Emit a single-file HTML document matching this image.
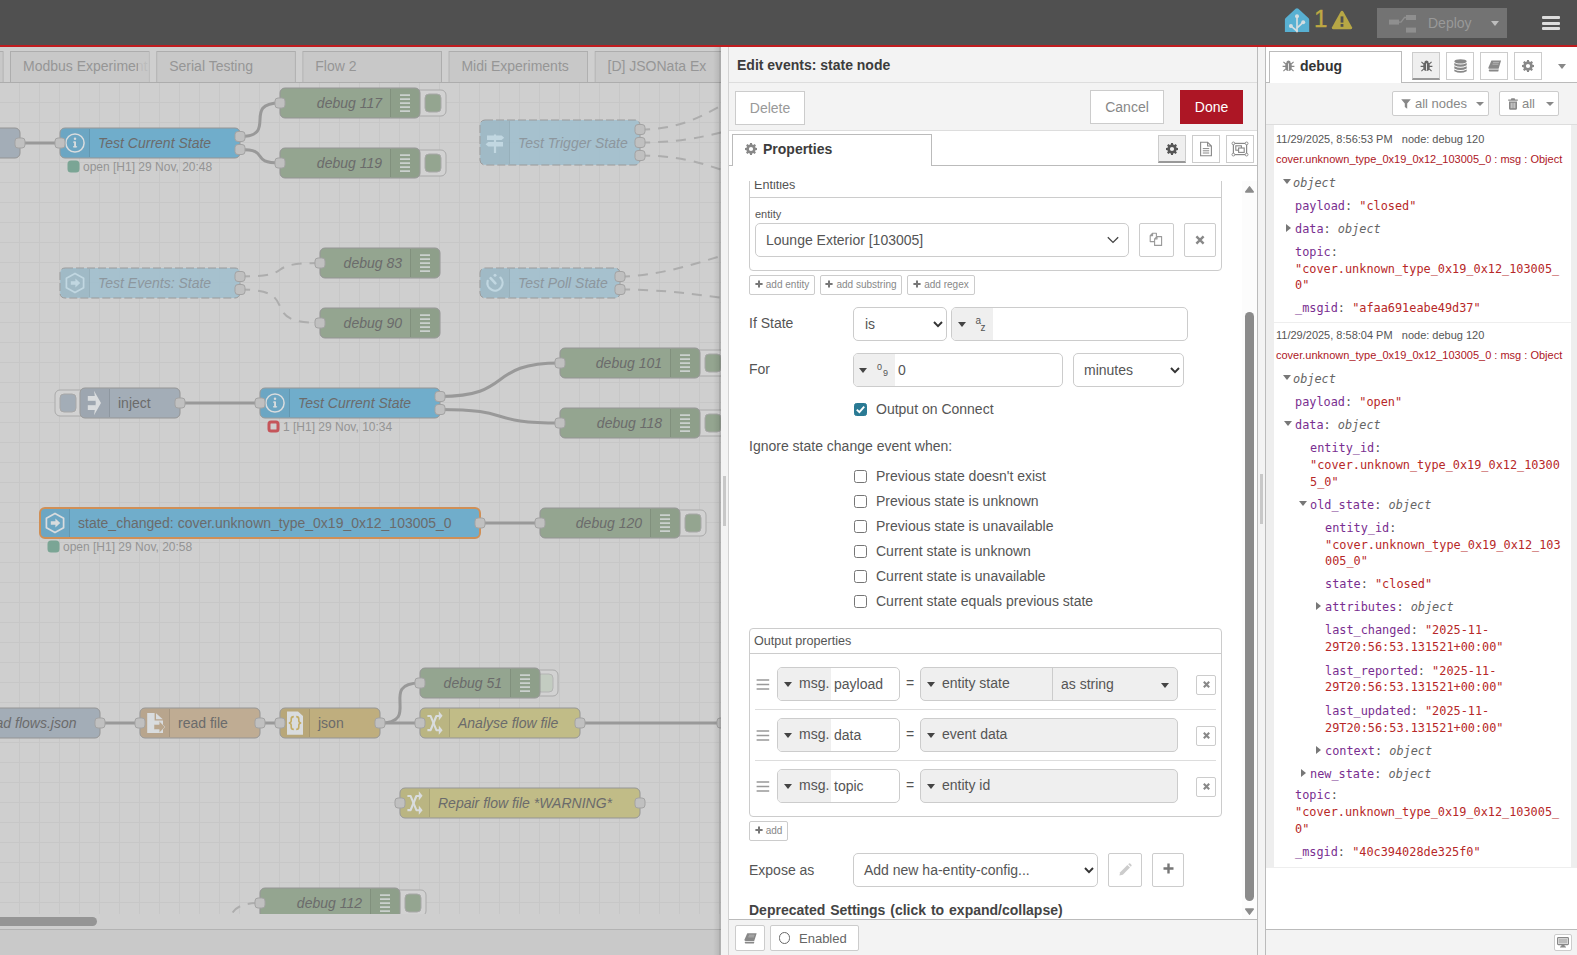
<!DOCTYPE html>
<html lang="en">
<head>
<meta charset="utf-8">
<title>Node-RED</title>
<style>
*{box-sizing:border-box;margin:0;padding:0}
html,body{width:1577px;height:955px;overflow:hidden;background:#f3f3f3;font-family:"Liberation Sans",Arial,sans-serif;font-size:14px;color:#555}
.abs{position:absolute}
#header{position:absolute;left:0;top:0;width:1577px;height:47px;background:#505050;border-bottom:2px solid #c01c1f}
#workspace{position:absolute;left:0;top:47px;width:721px;height:908px;background:#d0d0d0;overflow:hidden}
#tray{position:absolute;left:728px;top:47px;width:530px;height:908px;background:#fff;border-left:1px solid #d2d2d2;border-right:1px solid #bbb}
#sidebar{position:absolute;left:1265px;top:47px;width:312px;height:908px;background:#fff;border-left:1px solid #bbb}
#traysep{position:absolute;left:721px;top:47px;width:7px;height:908px;background:#f3f3f3}
#sidesep{position:absolute;left:1258px;top:47px;width:7px;height:908px;background:#f3f3f3}
.pg{position:absolute;left:0;top:0;width:0;height:0}
#tray .pg{left:-729px;top:-47px}
#sidebar .pg{left:-1266px;top:-47px}
.pg>*{position:absolute;white-space:nowrap}
.btn{border:1px solid #ccc;background:#fff;color:#888;text-align:center;white-space:nowrap}
.inp{border:1px solid #ccc;background:#fff;border-radius:5px;color:#555;white-space:nowrap;overflow:hidden}
.lbl{color:#555;font-size:14px;line-height:20px;white-space:nowrap}
.cb{width:13px;height:13px;border:1px solid #767676;border-radius:2.5px;background:#fff}
.box{border:1px solid #ccc;border-radius:4px}
.ti{border:1px solid #ccc;background:#fff;border-radius:5px;overflow:hidden}
.ti .tb{position:absolute;left:0;top:0;bottom:0;background:#efefef}
.sm{font-size:11px;line-height:17px;color:#888}
.car{width:0;height:0;border-left:4.5px solid transparent;border-right:4.5px solid transparent;border-top:5px solid #444}
.pl{font-size:13px;font-weight:bold;color:#777;margin-right:2px}
.plus{display:inline-block;vertical-align:0.5px;margin-right:3px}
.sm{font-size:10px !important}
.dm{font-size:11px;line-height:14px;color:#555}
.mono{font-family:"DejaVu Sans Mono","Liberation Mono",monospace;font-size:11.87px;line-height:18px;color:#555;letter-spacing:0}
.mono .k{color:#792e90}
.mono .s{color:#b72828}
.mono .t{font-style:italic;color:#666}
</style>
</head>
<body>
<div id="header">
<svg class="abs" style="left:1284px;top:7px" width="26" height="26" viewBox="0 0 26 26">
  <path d="M0.9 25 V12.8 Q0.9 11.8 1.7 11 L11.6 1.8 Q13 0.5 14.4 1.8 L24.4 11 Q25.2 11.8 25.2 12.8 V25 Z" fill="#58b0d2"/>
  <g stroke="#d3dde1" stroke-width="1.7" fill="none" stroke-linecap="round">
    <path d="M13 24.6 V10"/><path d="M13 24 L7.4 19.4"/><path d="M13.4 20.6 L18.8 15.6"/>
  </g>
  <circle cx="13" cy="9.2" r="2" fill="#d3dde1"/><circle cx="6.9" cy="19" r="2" fill="#d3dde1"/><circle cx="19.2" cy="15.2" r="2" fill="#d3dde1"/>
</svg>
<div class="abs" style="left:1314px;top:6px;font-size:24px;line-height:26px;color:#bfa842;font-weight:normal;-webkit-text-stroke:0.4px #bfa842">1</div>
<svg class="abs" style="left:1331px;top:10px" width="22" height="20" viewBox="0 0 22 20">
  <path d="M11 0.8 Q11.9 0.8 12.4 1.7 L21 17.2 Q21.6 19.2 19.8 19.2 H2.2 Q0.4 19.2 1 17.2 L9.6 1.7 Q10.1 0.8 11 0.8 Z" fill="#b7a745"/>
  <rect x="9.6" y="6.4" width="2.8" height="6.2" fill="#505050"/><rect x="9.6" y="14" width="2.8" height="2.8" fill="#505050"/>
</svg>
<div class="abs" style="left:1377px;top:8px;width:130px;height:30px;background:#737373"></div>
<svg class="abs" style="left:1388px;top:13px" width="30" height="20" viewBox="0 0 30 20">
  <rect x="1" y="6.6" width="10" height="5" fill="#8f8f8f"/><rect x="18" y="2" width="10" height="5" fill="#8f8f8f"/><rect x="18" y="14.6" width="10" height="5" fill="#8f8f8f"/>
  <path d="M11 9.1 L13 9.1 L16.5 4.5 L18 4.5" stroke="#8f8f8f" stroke-width="1.3" fill="none"/>
</svg>
<div class="abs" style="left:1428px;top:14px;font-size:14px;line-height:18px;color:#999">Deploy</div>
<div class="abs" style="left:1491px;top:21px;width:0;height:0;border-left:4.5px solid transparent;border-right:4.5px solid transparent;border-top:5px solid #bdbdbd"></div>
<div class="abs" style="left:1542px;top:16px;width:18px;height:3px;background:#dcdcdc;border-radius:1px"></div>
<div class="abs" style="left:1542px;top:21.5px;width:18px;height:3px;background:#dcdcdc;border-radius:1px"></div>
<div class="abs" style="left:1542px;top:27px;width:18px;height:3px;background:#dcdcdc;border-radius:1px"></div>
</div>
<div id="workspace"><svg class="abs" style="left:0;top:0" width="721" height="908" viewBox="0 47 721 908" font-family="Liberation Sans, Arial, sans-serif">
<defs><linearGradient id="edge" x1="0" x2="1" y1="0" y2="0"><stop offset="0" stop-color="#000" stop-opacity="0"/><stop offset="1" stop-color="#000" stop-opacity="0.08"/></linearGradient><clipPath id="cv"><rect x="0" y="83" width="721" height="831"/></clipPath></defs>
<rect x="0" y="47" width="721" height="908" fill="#cfcfcf"/>
<path d="M19.5 83V914 M39.5 83V914 M59.5 83V914 M79.5 83V914 M99.5 83V914 M119.5 83V914 M139.5 83V914 M159.5 83V914 M179.5 83V914 M199.5 83V914 M219.5 83V914 M239.5 83V914 M259.5 83V914 M279.5 83V914 M299.5 83V914 M319.5 83V914 M339.5 83V914 M359.5 83V914 M379.5 83V914 M399.5 83V914 M419.5 83V914 M439.5 83V914 M459.5 83V914 M479.5 83V914 M499.5 83V914 M519.5 83V914 M539.5 83V914 M559.5 83V914 M579.5 83V914 M599.5 83V914 M619.5 83V914 M639.5 83V914 M659.5 83V914 M679.5 83V914 M699.5 83V914 M719.5 83V914 M0 102.5H721 M0 122.5H721 M0 142.5H721 M0 162.5H721 M0 182.5H721 M0 202.5H721 M0 222.5H721 M0 242.5H721 M0 262.5H721 M0 282.5H721 M0 302.5H721 M0 322.5H721 M0 342.5H721 M0 362.5H721 M0 382.5H721 M0 402.5H721 M0 422.5H721 M0 442.5H721 M0 462.5H721 M0 482.5H721 M0 502.5H721 M0 522.5H721 M0 542.5H721 M0 562.5H721 M0 582.5H721 M0 602.5H721 M0 622.5H721 M0 642.5H721 M0 662.5H721 M0 682.5H721 M0 702.5H721 M0 722.5H721 M0 742.5H721 M0 762.5H721 M0 782.5H721 M0 802.5H721 M0 822.5H721 M0 842.5H721 M0 862.5H721 M0 882.5H721 M0 902.5H721" stroke="#c7c7c7" stroke-width="1" fill="none"/>
<rect x="0" y="47" width="721" height="35.5" fill="#cfcfcf"/>
<svg x="-136" y="51" width="139.7" height="32" overflow="hidden"><rect x="0.5" y="0.5" width="138.7" height="40" fill="#c8c8c8" stroke="#adadad"/><text x="13" y="20" font-size="14" fill="#969696"></text></svg>
<svg x="10" y="51" width="139.7" height="32" overflow="hidden"><rect x="0.5" y="0.5" width="138.7" height="40" fill="#c8c8c8" stroke="#adadad"/><text x="13" y="20" font-size="14" fill="#969696">Modbus Experiment</text><rect x="128" y="1" width="11" height="30" fill="#c8c8c8" opacity="0.75"/></svg>
<svg x="156.2" y="51" width="139.7" height="32" overflow="hidden"><rect x="0.5" y="0.5" width="138.7" height="40" fill="#c8c8c8" stroke="#adadad"/><text x="13" y="20" font-size="14" fill="#969696">Serial Testing</text></svg>
<svg x="302.3" y="51" width="139.7" height="32" overflow="hidden"><rect x="0.5" y="0.5" width="138.7" height="40" fill="#c8c8c8" stroke="#adadad"/><text x="13" y="20" font-size="14" fill="#969696">Flow 2</text></svg>
<svg x="448.4" y="51" width="139.7" height="32" overflow="hidden"><rect x="0.5" y="0.5" width="138.7" height="40" fill="#c8c8c8" stroke="#adadad"/><text x="13" y="20" font-size="14" fill="#969696">Midi Experiments</text></svg>
<svg x="594.5" y="51" width="139.7" height="32" overflow="hidden"><rect x="0.5" y="0.5" width="138.7" height="40" fill="#c8c8c8" stroke="#adadad"/><text x="13" y="20" font-size="14" fill="#969696">[D] JSONata Ex</text></svg>
<path d="M0 82.5H721" stroke="#adadad" stroke-width="1"/>
<g clip-path="url(#cv)">
<path d="M20 143 C50.0 143 30.0 143 60 143" stroke="#999" stroke-width="3" fill="none"/>
<path d="M240 136.5 C279.1 136.5 240.9 103 280 103" stroke="#999" stroke-width="3" fill="none"/>
<path d="M240 149.5 C271.7 149.5 248.3 163 280 163" stroke="#999" stroke-width="3" fill="none"/>
<path d="M640 129.5 C715.0 129.5 725.0 83 800 83" stroke="#adadad" stroke-width="2" stroke-dasharray="10 8" fill="none"/>
<path d="M640 142.5 C715.0 142.5 725.0 123 800 123" stroke="#adadad" stroke-width="2" stroke-dasharray="10 8" fill="none"/>
<path d="M640 155.5 C715.0 155.5 725.0 183 800 183" stroke="#adadad" stroke-width="2" stroke-dasharray="10 8" fill="none"/>
<path d="M240 276.5 C300.8 276.5 259.2 263 320 263" stroke="#adadad" stroke-width="2" stroke-dasharray="10 8" fill="none"/>
<path d="M240 289.5 C305.0 289.5 255.0 323 320 323" stroke="#adadad" stroke-width="2" stroke-dasharray="10 8" fill="none"/>
<path d="M620 276.5 C695.0 276.5 785.0 223 860 223" stroke="#adadad" stroke-width="2" stroke-dasharray="10 8" fill="none"/>
<path d="M620 289.5 C695.0 289.5 725.0 303 800 303" stroke="#adadad" stroke-width="2" stroke-dasharray="10 8" fill="none"/>
<path d="M180 403 C240.0 403 200.0 403 260 403" stroke="#999" stroke-width="3" fill="none"/>
<path d="M440 396.5 C515.0 396.5 485.0 363 560 363" stroke="#999" stroke-width="3" fill="none"/>
<path d="M440 409.5 C515.0 409.5 485.0 423 560 423" stroke="#999" stroke-width="3" fill="none"/>
<path d="M480 523 C525.0 523 495.0 523 540 523" stroke="#999" stroke-width="3" fill="none"/>
<path d="M100 723 C130.0 723 110.0 723 140 723" stroke="#999" stroke-width="3" fill="none"/>
<path d="M260 723 C275.0 723 265.0 723 280 723" stroke="#999" stroke-width="3" fill="none"/>
<path d="M380 723 C422.4 723 377.6 683 420 683" stroke="#999" stroke-width="3" fill="none"/>
<path d="M380 723 C410.0 723 390.0 723 420 723" stroke="#999" stroke-width="3" fill="none"/>
<path d="M580 723 C655.0 723 645.0 723 720 723" stroke="#999" stroke-width="3" fill="none"/>
<path d="M200 963 C263.6 963 196.4 903 260 903" stroke="#adadad" stroke-width="2" stroke-dasharray="10 8" fill="none"/>
<rect x="-80" y="128" width="100" height="30" rx="5" fill="#a3adb7" stroke="#959595" stroke-width="1"/>
<text x="-42" y="147.6" font-size="14" font-style="italic" fill="#6b6b6b"></text>
<rect x="15" y="138.0" width="10" height="10" rx="3" fill="#c0c0c0" stroke="#a3a3a3" stroke-width="1"/>
<rect x="60" y="128" width="180" height="30" rx="5" fill="#70adcb" stroke="#959595" stroke-width="1"/>
<path d="M90 129 H65 a4 4 0 0 0 -4 4 V153 a4 4 0 0 0 4 4 H90 Z" fill="#000" fill-opacity="0.035"/>
<path d="M89.5 129V157" stroke="#000" stroke-opacity="0.09"/>
<g transform="translate(75 143.0)" opacity="1"><circle r="9.1" fill="none" stroke="#d9dcde" stroke-width="1.5"/><rect x="-0.9" y="-1.5" width="1.9" height="5.8" fill="#d9dcde"/><rect x="-1.9" y="-1.5" width="2" height="1.2" fill="#d9dcde"/><rect x="-2" y="3.2" width="4.1" height="1.2" fill="#d9dcde"/><circle cx="0" cy="-4.2" r="1.25" fill="#d9dcde"/></g>
<text x="98" y="147.6" font-size="14" font-style="italic" fill="#6b6b6b">Test Current State</text>
<rect x="55" y="138.0" width="10" height="10" rx="3" fill="#c0c0c0" stroke="#a3a3a3" stroke-width="1"/>
<rect x="235" y="131.5" width="10" height="10" rx="3" fill="#c0c0c0" stroke="#a3a3a3" stroke-width="1"/>
<rect x="235" y="144.5" width="10" height="10" rx="3" fill="#c0c0c0" stroke="#a3a3a3" stroke-width="1"/>
<rect x="69" y="162" width="9" height="9" rx="2" fill="#7ba595" stroke="#7ba595" stroke-width="3" stroke-linejoin="round"/>
<text x="83" y="170.6" font-size="12" fill="#949494">open [H1] 29 Nov, 20:48</text>
<rect x="414" y="90" width="32" height="26" rx="5" fill="#d2d2d2" stroke="#aaaaaa"/>
<rect x="425" y="94" width="16" height="18" rx="4" fill="#94a590" stroke="#a8a8a8" stroke-width="1"/>
<rect x="280" y="88" width="140" height="30" rx="5" fill="#94a590" stroke="#959595" stroke-width="1"/>
<path d="M390 89 H415 a4 4 0 0 1 4 4 V113 a4 4 0 0 1 -4 4 H390 Z" fill="#000" fill-opacity="0.035"/>
<path d="M390.5 89V117" stroke="#000" stroke-opacity="0.09"/>
<g transform="translate(405 103.0)" opacity="1"><rect x="-5" y="-8.6" width="10" height="1.4" fill="#d9dcde"/><rect x="-5" y="-4.6" width="10" height="1.4" fill="#d9dcde"/><rect x="-5" y="-0.5999999999999996" width="10" height="1.4" fill="#d9dcde"/><rect x="-5" y="3.4000000000000004" width="10" height="1.4" fill="#d9dcde"/><rect x="-5" y="7.4" width="10" height="1.4" fill="#d9dcde"/></g>
<text x="382" y="107.6" font-size="14" font-style="italic" text-anchor="end" fill="#6b6b6b">debug 117</text>
<rect x="275" y="98.0" width="10" height="10" rx="3" fill="#c0c0c0" stroke="#a3a3a3" stroke-width="1"/>
<rect x="414" y="150" width="32" height="26" rx="5" fill="#d2d2d2" stroke="#aaaaaa"/>
<rect x="425" y="154" width="16" height="18" rx="4" fill="#94a590" stroke="#a8a8a8" stroke-width="1"/>
<rect x="280" y="148" width="140" height="30" rx="5" fill="#94a590" stroke="#959595" stroke-width="1"/>
<path d="M390 149 H415 a4 4 0 0 1 4 4 V173 a4 4 0 0 1 -4 4 H390 Z" fill="#000" fill-opacity="0.035"/>
<path d="M390.5 149V177" stroke="#000" stroke-opacity="0.09"/>
<g transform="translate(405 163.0)" opacity="1"><rect x="-5" y="-8.6" width="10" height="1.4" fill="#d9dcde"/><rect x="-5" y="-4.6" width="10" height="1.4" fill="#d9dcde"/><rect x="-5" y="-0.5999999999999996" width="10" height="1.4" fill="#d9dcde"/><rect x="-5" y="3.4000000000000004" width="10" height="1.4" fill="#d9dcde"/><rect x="-5" y="7.4" width="10" height="1.4" fill="#d9dcde"/></g>
<text x="382" y="167.6" font-size="14" font-style="italic" text-anchor="end" fill="#6b6b6b">debug 119</text>
<rect x="275" y="158.0" width="10" height="10" rx="3" fill="#c0c0c0" stroke="#a3a3a3" stroke-width="1"/>
<rect x="480" y="120" width="160" height="45" rx="5" fill="#a2bfce" fill-opacity="0.93" stroke="#9a9a9a" stroke-width="1" stroke-dasharray="8 3"/>
<path d="M510 121 H485 a4 4 0 0 0 -4 4 V160 a4 4 0 0 0 4 4 H510 Z" fill="#000" fill-opacity="0.035"/>
<path d="M509.5 121V164" stroke="#000" stroke-opacity="0.05"/>
<g transform="translate(495 143.5)" opacity="1"><rect x="-1.1" y="-9" width="2.2" height="18.5" fill="#c1d7e1"/><path d="M-8 -8 H6.6 L9.2 -5.8 L6.6 -3.6 H-8 Z" fill="#c1d7e1"/><path d="M8 -1.6 H-6.8 L-9.4 0.7 L-6.8 3 H8 Z" fill="#c1d7e1"/></g>
<text x="518" y="148.1" font-size="14" font-style="italic" fill="#8d979e">Test Trigger State</text>
<rect x="635" y="124.5" width="10" height="10" rx="3" fill="#c0c0c0" stroke="#a3a3a3" stroke-width="1"/>
<rect x="635" y="137.5" width="10" height="10" rx="3" fill="#c0c0c0" stroke="#a3a3a3" stroke-width="1"/>
<rect x="635" y="150.5" width="10" height="10" rx="3" fill="#c0c0c0" stroke="#a3a3a3" stroke-width="1"/>
<rect x="60" y="268" width="180" height="30" rx="5" fill="#a2bfce" fill-opacity="0.93" stroke="#9a9a9a" stroke-width="1" stroke-dasharray="8 3"/>
<path d="M90 269 H65 a4 4 0 0 0 -4 4 V293 a4 4 0 0 0 4 4 H90 Z" fill="#000" fill-opacity="0.035"/>
<path d="M89.5 269V297" stroke="#000" stroke-opacity="0.05"/>
<g transform="translate(75 283.0)" opacity="1"><path d="M0 -9.6 L8.6 -4.8 V4.8 L0 9.6 L-8.6 4.8 V-4.8 Z" fill="none" stroke="#c1d7e1" stroke-width="1.7" stroke-linejoin="round"/><path d="M-4.2 -1.7 H0.4 V-4.6 L5.2 0 L0.4 4.6 V1.7 H-4.2 Z" fill="#c1d7e1"/></g>
<text x="98" y="287.6" font-size="14" font-style="italic" fill="#8d979e">Test Events: State</text>
<rect x="235" y="271.5" width="10" height="10" rx="3" fill="#c0c0c0" stroke="#a3a3a3" stroke-width="1"/>
<rect x="235" y="284.5" width="10" height="10" rx="3" fill="#c0c0c0" stroke="#a3a3a3" stroke-width="1"/>
<rect x="320" y="248" width="120" height="30" rx="5" fill="#94a590" stroke="#959595" stroke-width="1"/>
<path d="M410 249 H435 a4 4 0 0 1 4 4 V273 a4 4 0 0 1 -4 4 H410 Z" fill="#000" fill-opacity="0.035"/>
<path d="M410.5 249V277" stroke="#000" stroke-opacity="0.09"/>
<g transform="translate(425 263.0)" opacity="1"><rect x="-5" y="-8.6" width="10" height="1.4" fill="#d9dcde"/><rect x="-5" y="-4.6" width="10" height="1.4" fill="#d9dcde"/><rect x="-5" y="-0.5999999999999996" width="10" height="1.4" fill="#d9dcde"/><rect x="-5" y="3.4000000000000004" width="10" height="1.4" fill="#d9dcde"/><rect x="-5" y="7.4" width="10" height="1.4" fill="#d9dcde"/></g>
<text x="402" y="267.6" font-size="14" font-style="italic" text-anchor="end" fill="#6b6b6b">debug 83</text>
<rect x="315" y="258.0" width="10" height="10" rx="3" fill="#c0c0c0" stroke="#a3a3a3" stroke-width="1"/>
<rect x="320" y="308" width="120" height="30" rx="5" fill="#94a590" stroke="#959595" stroke-width="1"/>
<path d="M410 309 H435 a4 4 0 0 1 4 4 V333 a4 4 0 0 1 -4 4 H410 Z" fill="#000" fill-opacity="0.035"/>
<path d="M410.5 309V337" stroke="#000" stroke-opacity="0.09"/>
<g transform="translate(425 323.0)" opacity="1"><rect x="-5" y="-8.6" width="10" height="1.4" fill="#d9dcde"/><rect x="-5" y="-4.6" width="10" height="1.4" fill="#d9dcde"/><rect x="-5" y="-0.5999999999999996" width="10" height="1.4" fill="#d9dcde"/><rect x="-5" y="3.4000000000000004" width="10" height="1.4" fill="#d9dcde"/><rect x="-5" y="7.4" width="10" height="1.4" fill="#d9dcde"/></g>
<text x="402" y="327.6" font-size="14" font-style="italic" text-anchor="end" fill="#6b6b6b">debug 90</text>
<rect x="315" y="318.0" width="10" height="10" rx="3" fill="#c0c0c0" stroke="#a3a3a3" stroke-width="1"/>
<rect x="480" y="268" width="140" height="30" rx="5" fill="#a2bfce" fill-opacity="0.93" stroke="#9a9a9a" stroke-width="1" stroke-dasharray="8 3"/>
<path d="M510 269 H485 a4 4 0 0 0 -4 4 V293 a4 4 0 0 0 4 4 H510 Z" fill="#000" fill-opacity="0.035"/>
<path d="M509.5 269V297" stroke="#000" stroke-opacity="0.05"/>
<g transform="translate(495 283.0)" opacity="1"><path d="M5.4 -5.4 A7.6 7.6 0 1 1 -7.3 -2.2" fill="none" stroke="#c1d7e1" stroke-width="2.2" stroke-linecap="round"/><circle cx="0" cy="-7.8" r="1.5" fill="#c1d7e1"/><path d="M0.4 0.4 L-4.4 -4.8" stroke="#c1d7e1" stroke-width="2.6" stroke-linecap="round"/></g>
<text x="518" y="287.6" font-size="14" font-style="italic" fill="#8d979e">Test Poll State</text>
<rect x="615" y="271.5" width="10" height="10" rx="3" fill="#c0c0c0" stroke="#a3a3a3" stroke-width="1"/>
<rect x="615" y="284.5" width="10" height="10" rx="3" fill="#c0c0c0" stroke="#a3a3a3" stroke-width="1"/>
<rect x="55" y="390" width="32" height="26" rx="5" fill="#d2d2d2" stroke="#aaaaaa"/>
<rect x="60" y="394" width="16" height="18" rx="4" fill="#a3adb7" stroke="#a8a8a8" stroke-width="1"/>
<rect x="80" y="388" width="100" height="30" rx="5" fill="#a3adb7" stroke="#959595" stroke-width="1"/>
<path d="M110 389 H85 a4 4 0 0 0 -4 4 V413 a4 4 0 0 0 4 4 H110 Z" fill="#000" fill-opacity="0.035"/>
<path d="M109.5 389V417" stroke="#000" stroke-opacity="0.09"/>
<g transform="translate(95 403.0)" opacity="1"><rect x="-7.2" y="-7" width="8" height="4.8" fill="#d9dcde"/><rect x="-7.2" y="2.2" width="8" height="4.8" fill="#d9dcde"/><path d="M-1 -12.2 L6 0 L-1 12.2 L0.8 0 Z" fill="#d9dcde"/></g>
<text x="118" y="407.6" font-size="14" font-style="normal" fill="#6b6b6b">inject</text>
<rect x="175" y="398.0" width="10" height="10" rx="3" fill="#c0c0c0" stroke="#a3a3a3" stroke-width="1"/>
<rect x="260" y="388" width="180" height="30" rx="5" fill="#70adcb" stroke="#959595" stroke-width="1"/>
<path d="M290 389 H265 a4 4 0 0 0 -4 4 V413 a4 4 0 0 0 4 4 H290 Z" fill="#000" fill-opacity="0.035"/>
<path d="M289.5 389V417" stroke="#000" stroke-opacity="0.09"/>
<g transform="translate(275 403.0)" opacity="1"><circle r="9.1" fill="none" stroke="#d9dcde" stroke-width="1.5"/><rect x="-0.9" y="-1.5" width="1.9" height="5.8" fill="#d9dcde"/><rect x="-1.9" y="-1.5" width="2" height="1.2" fill="#d9dcde"/><rect x="-2" y="3.2" width="4.1" height="1.2" fill="#d9dcde"/><circle cx="0" cy="-4.2" r="1.25" fill="#d9dcde"/></g>
<text x="298" y="407.6" font-size="14" font-style="italic" fill="#6b6b6b">Test Current State</text>
<rect x="255" y="398.0" width="10" height="10" rx="3" fill="#c0c0c0" stroke="#a3a3a3" stroke-width="1"/>
<rect x="435" y="391.5" width="10" height="10" rx="3" fill="#c0c0c0" stroke="#a3a3a3" stroke-width="1"/>
<rect x="435" y="404.5" width="10" height="10" rx="3" fill="#c0c0c0" stroke="#a3a3a3" stroke-width="1"/>
<rect x="269" y="422" width="9" height="9" rx="2" fill="#d0cfcf" stroke="#c5555a" stroke-width="3" stroke-linejoin="round"/>
<text x="283" y="430.6" font-size="12" fill="#949494">1 [H1] 29 Nov, 10:34</text>
<rect x="694" y="350" width="32" height="26" rx="5" fill="#d2d2d2" stroke="#aaaaaa"/>
<rect x="705" y="354" width="16" height="18" rx="4" fill="#94a590" stroke="#a8a8a8" stroke-width="1"/>
<rect x="560" y="348" width="140" height="30" rx="5" fill="#94a590" stroke="#959595" stroke-width="1"/>
<path d="M670 349 H695 a4 4 0 0 1 4 4 V373 a4 4 0 0 1 -4 4 H670 Z" fill="#000" fill-opacity="0.035"/>
<path d="M670.5 349V377" stroke="#000" stroke-opacity="0.09"/>
<g transform="translate(685 363.0)" opacity="1"><rect x="-5" y="-8.6" width="10" height="1.4" fill="#d9dcde"/><rect x="-5" y="-4.6" width="10" height="1.4" fill="#d9dcde"/><rect x="-5" y="-0.5999999999999996" width="10" height="1.4" fill="#d9dcde"/><rect x="-5" y="3.4000000000000004" width="10" height="1.4" fill="#d9dcde"/><rect x="-5" y="7.4" width="10" height="1.4" fill="#d9dcde"/></g>
<text x="662" y="367.6" font-size="14" font-style="italic" text-anchor="end" fill="#6b6b6b">debug 101</text>
<rect x="555" y="358.0" width="10" height="10" rx="3" fill="#c0c0c0" stroke="#a3a3a3" stroke-width="1"/>
<rect x="694" y="410" width="32" height="26" rx="5" fill="#d2d2d2" stroke="#aaaaaa"/>
<rect x="705" y="414" width="16" height="18" rx="4" fill="#94a590" stroke="#a8a8a8" stroke-width="1"/>
<rect x="560" y="408" width="140" height="30" rx="5" fill="#94a590" stroke="#959595" stroke-width="1"/>
<path d="M670 409 H695 a4 4 0 0 1 4 4 V433 a4 4 0 0 1 -4 4 H670 Z" fill="#000" fill-opacity="0.035"/>
<path d="M670.5 409V437" stroke="#000" stroke-opacity="0.09"/>
<g transform="translate(685 423.0)" opacity="1"><rect x="-5" y="-8.6" width="10" height="1.4" fill="#d9dcde"/><rect x="-5" y="-4.6" width="10" height="1.4" fill="#d9dcde"/><rect x="-5" y="-0.5999999999999996" width="10" height="1.4" fill="#d9dcde"/><rect x="-5" y="3.4000000000000004" width="10" height="1.4" fill="#d9dcde"/><rect x="-5" y="7.4" width="10" height="1.4" fill="#d9dcde"/></g>
<text x="662" y="427.6" font-size="14" font-style="italic" text-anchor="end" fill="#6b6b6b">debug 118</text>
<rect x="555" y="418.0" width="10" height="10" rx="3" fill="#c0c0c0" stroke="#a3a3a3" stroke-width="1"/>
<rect x="40" y="508" width="440" height="30" rx="5" fill="#70adcb" stroke="#d08f56" stroke-width="2"/>
<path d="M70 509 H45 a4 4 0 0 0 -4 4 V533 a4 4 0 0 0 4 4 H70 Z" fill="#000" fill-opacity="0.035"/>
<path d="M69.5 509V537" stroke="#000" stroke-opacity="0.09"/>
<g transform="translate(55 523.0)" opacity="1"><path d="M0 -9.6 L8.6 -4.8 V4.8 L0 9.6 L-8.6 4.8 V-4.8 Z" fill="none" stroke="#d9dcde" stroke-width="1.7" stroke-linejoin="round"/><path d="M-4.2 -1.7 H0.4 V-4.6 L5.2 0 L0.4 4.6 V1.7 H-4.2 Z" fill="#d9dcde"/></g>
<text x="78" y="527.6" font-size="14" font-style="normal" fill="#6b6b6b">state_changed: cover.unknown_type_0x19_0x12_103005_0</text>
<rect x="475" y="518.0" width="10" height="10" rx="3" fill="#c0c0c0" stroke="#a3a3a3" stroke-width="1"/>
<rect x="49" y="542" width="9" height="9" rx="2" fill="#7ba595" stroke="#7ba595" stroke-width="3" stroke-linejoin="round"/>
<text x="63" y="550.6" font-size="12" fill="#949494">open [H1] 29 Nov, 20:58</text>
<rect x="674" y="510" width="32" height="26" rx="5" fill="#d2d2d2" stroke="#aaaaaa"/>
<rect x="685" y="514" width="16" height="18" rx="4" fill="#94a590" stroke="#a8a8a8" stroke-width="1"/>
<rect x="540" y="508" width="140" height="30" rx="5" fill="#94a590" stroke="#959595" stroke-width="1"/>
<path d="M650 509 H675 a4 4 0 0 1 4 4 V533 a4 4 0 0 1 -4 4 H650 Z" fill="#000" fill-opacity="0.035"/>
<path d="M650.5 509V537" stroke="#000" stroke-opacity="0.09"/>
<g transform="translate(665 523.0)" opacity="1"><rect x="-5" y="-8.6" width="10" height="1.4" fill="#d9dcde"/><rect x="-5" y="-4.6" width="10" height="1.4" fill="#d9dcde"/><rect x="-5" y="-0.5999999999999996" width="10" height="1.4" fill="#d9dcde"/><rect x="-5" y="3.4000000000000004" width="10" height="1.4" fill="#d9dcde"/><rect x="-5" y="7.4" width="10" height="1.4" fill="#d9dcde"/></g>
<text x="642" y="527.6" font-size="14" font-style="italic" text-anchor="end" fill="#6b6b6b">debug 120</text>
<rect x="535" y="518.0" width="10" height="10" rx="3" fill="#c0c0c0" stroke="#a3a3a3" stroke-width="1"/>
<rect x="526" y="670" width="32" height="26" rx="5" fill="#d2d2d2" stroke="#aaaaaa"/>
<rect x="537" y="674" width="16" height="18" rx="4" fill="#c3ccc1" stroke="#b4b4b4" stroke-width="1"/>
<rect x="420" y="668" width="120" height="30" rx="5" fill="#94a590" stroke="#959595" stroke-width="1"/>
<path d="M510 669 H535 a4 4 0 0 1 4 4 V693 a4 4 0 0 1 -4 4 H510 Z" fill="#000" fill-opacity="0.035"/>
<path d="M510.5 669V697" stroke="#000" stroke-opacity="0.09"/>
<g transform="translate(525 683.0)" opacity="1"><rect x="-5" y="-8.6" width="10" height="1.4" fill="#d9dcde"/><rect x="-5" y="-4.6" width="10" height="1.4" fill="#d9dcde"/><rect x="-5" y="-0.5999999999999996" width="10" height="1.4" fill="#d9dcde"/><rect x="-5" y="3.4000000000000004" width="10" height="1.4" fill="#d9dcde"/><rect x="-5" y="7.4" width="10" height="1.4" fill="#d9dcde"/></g>
<text x="502" y="687.6" font-size="14" font-style="italic" text-anchor="end" fill="#6b6b6b">debug 51</text>
<rect x="415" y="678.0" width="10" height="10" rx="3" fill="#c0c0c0" stroke="#a3a3a3" stroke-width="1"/>
<rect x="-100" y="708" width="200" height="30" rx="5" fill="#a3adb7" stroke="#959595" stroke-width="1"/>
<text x="76.5" y="727.6" font-size="14" font-style="italic" text-anchor="end" fill="#6b6b6b">Read flows.json</text>
<rect x="95" y="718.0" width="10" height="10" rx="3" fill="#c0c0c0" stroke="#a3a3a3" stroke-width="1"/>
<rect x="140" y="708" width="120" height="30" rx="5" fill="#bfac93" stroke="#959595" stroke-width="1"/>
<path d="M170 709 H145 a4 4 0 0 0 -4 4 V733 a4 4 0 0 0 4 4 H170 Z" fill="#000" fill-opacity="0.035"/>
<path d="M169.5 709V737" stroke="#000" stroke-opacity="0.09"/>
<g transform="translate(155 723.0)" opacity="1"><path d="M-7.8 -10 H-0.4 V-2.600 H8 V10 H-7.800 Z" fill="#d9dcde"/><path d="M1 -9.800 L7.800 -3.800 H1 Z" fill="#d9dcde"/><path d="M-1 1.400 H4.200 V-1.900 L10 4 L4.200 9.900 V6.600 H-1 Z" fill="#b9a68d" stroke="#d9dcde" stroke-width="0.500"/></g>
<text x="178" y="727.6" font-size="14" font-style="normal" fill="#6b6b6b">read file</text>
<rect x="135" y="718.0" width="10" height="10" rx="3" fill="#c0c0c0" stroke="#a3a3a3" stroke-width="1"/>
<rect x="255" y="718.0" width="10" height="10" rx="3" fill="#c0c0c0" stroke="#a3a3a3" stroke-width="1"/>
<rect x="280" y="708" width="100" height="30" rx="5" fill="#bfae7e" stroke="#959595" stroke-width="1"/>
<path d="M310 709 H285 a4 4 0 0 0 -4 4 V733 a4 4 0 0 0 4 4 H310 Z" fill="#000" fill-opacity="0.035"/>
<path d="M309.5 709V737" stroke="#000" stroke-opacity="0.09"/>
<g transform="translate(295 723.0)" opacity="1"><path d="M-8 -11.400 H3 L8 -7 V11.800 H-8 Z" fill="#d9dcde"/><path d="M-1.200 -6.400 q-2.600 0 -2.600 2.400 v1.800 q0 2 -2.400 2.200 q2.400 0.200 2.400 2.200 v1.800 q0 2.400 2.600 2.400" fill="none" stroke="#c4ad66" stroke-width="1.600"/><path d="M1.200 -6.400 q2.600 0 2.600 2.400 v1.800 q0 2 2.400 2.200 q-2.400 0.200 -2.400 2.200 v1.800 q0 2.400 -2.600 2.400" fill="none" stroke="#c4ad66" stroke-width="1.600"/></g>
<text x="318" y="727.6" font-size="14" font-style="normal" fill="#6b6b6b">json</text>
<rect x="275" y="718.0" width="10" height="10" rx="3" fill="#c0c0c0" stroke="#a3a3a3" stroke-width="1"/>
<rect x="375" y="718.0" width="10" height="10" rx="3" fill="#c0c0c0" stroke="#a3a3a3" stroke-width="1"/>
<rect x="420" y="708" width="160" height="30" rx="5" fill="#c1bc87" stroke="#959595" stroke-width="1"/>
<path d="M450 709 H425 a4 4 0 0 0 -4 4 V733 a4 4 0 0 0 4 4 H450 Z" fill="#000" fill-opacity="0.035"/>
<path d="M449.5 709V737" stroke="#000" stroke-opacity="0.09"/>
<g transform="translate(435 723.0)" opacity="1"><path d="M-7.600 -7 H-4.400 L1.400 7.200 H4.400" fill="none" stroke="#d9dcde" stroke-width="2" stroke-linejoin="round"/><path d="M-7.600 7.200 H-4.400 L1.400 -7 H4.400" fill="none" stroke="#d9dcde" stroke-width="2.200" stroke-linejoin="round"/><path d="M3.800 -11.800 L7.600 -7.200 L3.800 -2.600 Z" fill="#d9dcde"/><path d="M3.800 2.600 L7.600 7.200 L3.800 11.800 Z" fill="#d9dcde"/></g>
<text x="458" y="727.6" font-size="14" font-style="italic" fill="#6b6b6b">Analyse flow file</text>
<rect x="415" y="718.0" width="10" height="10" rx="3" fill="#c0c0c0" stroke="#a3a3a3" stroke-width="1"/>
<rect x="575" y="718.0" width="10" height="10" rx="3" fill="#c0c0c0" stroke="#a3a3a3" stroke-width="1"/>
<rect x="717" y="718" width="10" height="10" rx="3" fill="#c0c0c0" stroke="#a3a3a3" stroke-width="1"/>
<rect x="400" y="788" width="240" height="30" rx="5" fill="#c1bc87" stroke="#959595" stroke-width="1"/>
<path d="M430 789 H405 a4 4 0 0 0 -4 4 V813 a4 4 0 0 0 4 4 H430 Z" fill="#000" fill-opacity="0.035"/>
<path d="M429.5 789V817" stroke="#000" stroke-opacity="0.09"/>
<g transform="translate(415 803.0)" opacity="1"><path d="M-7.600 -7 H-4.400 L1.400 7.200 H4.400" fill="none" stroke="#d9dcde" stroke-width="2" stroke-linejoin="round"/><path d="M-7.600 7.200 H-4.400 L1.400 -7 H4.400" fill="none" stroke="#d9dcde" stroke-width="2.200" stroke-linejoin="round"/><path d="M3.800 -11.800 L7.600 -7.200 L3.800 -2.600 Z" fill="#d9dcde"/><path d="M3.800 2.600 L7.600 7.200 L3.800 11.800 Z" fill="#d9dcde"/></g>
<text x="438" y="807.6" font-size="14" font-style="italic" fill="#6b6b6b">Repair flow file *WARNING*</text>
<rect x="395" y="798.0" width="10" height="10" rx="3" fill="#c0c0c0" stroke="#a3a3a3" stroke-width="1"/>
<rect x="635" y="798.0" width="10" height="10" rx="3" fill="#c0c0c0" stroke="#a3a3a3" stroke-width="1"/>
<rect x="394" y="890" width="32" height="26" rx="5" fill="#d2d2d2" stroke="#aaaaaa"/>
<rect x="405" y="894" width="16" height="18" rx="4" fill="#94a590" stroke="#a8a8a8" stroke-width="1"/>
<rect x="260" y="888" width="140" height="30" rx="5" fill="#94a590" stroke="#959595" stroke-width="1"/>
<path d="M370 889 H395 a4 4 0 0 1 4 4 V913 a4 4 0 0 1 -4 4 H370 Z" fill="#000" fill-opacity="0.035"/>
<path d="M370.5 889V917" stroke="#000" stroke-opacity="0.09"/>
<g transform="translate(385 903.0)" opacity="1"><rect x="-5" y="-8.6" width="10" height="1.4" fill="#d9dcde"/><rect x="-5" y="-4.6" width="10" height="1.4" fill="#d9dcde"/><rect x="-5" y="-0.5999999999999996" width="10" height="1.4" fill="#d9dcde"/><rect x="-5" y="3.4000000000000004" width="10" height="1.4" fill="#d9dcde"/><rect x="-5" y="7.4" width="10" height="1.4" fill="#d9dcde"/></g>
<text x="362" y="907.6" font-size="14" font-style="italic" text-anchor="end" fill="#6b6b6b">debug 112</text>
<rect x="255" y="898.0" width="10" height="10" rx="3" fill="#c0c0c0" stroke="#a3a3a3" stroke-width="1"/>
</g>
<rect x="0" y="914" width="720" height="15" fill="#cfcfcf"/>
<rect x="-10" y="917" width="107" height="9" rx="4.5" fill="#959595"/>
<rect x="0" y="929" width="720" height="26" fill="#c9c9c9"/>
<path d="M0 929.5H721" stroke="#b3b3b3"/>
<rect x="713" y="47" width="6" height="908" fill="url(#edge)"/>
<rect x="719" y="47" width="2" height="908" fill="#000" fill-opacity="0.145"/>
</svg></div>
<div id="traysep"><i style="position:absolute;left:2px;top:429px;width:3px;height:50px;background:#c8c8c8"></i></div>
<div id="tray"><div class="pg">
<!-- header -->
<div style="left:729px;top:47px;width:528px;height:36px;background:#f3f3f3;border-bottom:1px solid #ddd"></div>
<div style="left:737px;top:55px;font-size:14px;font-weight:bold;color:#3c3c3c;line-height:20px;white-space:nowrap">Edit events: state node</div>
<!-- toolbar -->
<div style="left:729px;top:83px;width:528px;height:48px;background:#f3f3f3;border-bottom:1px solid #ddd"></div>
<div class="btn" style="left:735px;top:91px;width:70px;height:34px;line-height:32px;font-size:14px;color:#999">Delete</div>
<div class="btn" style="left:1090px;top:90px;width:74px;height:34px;line-height:32px;font-size:14px;color:#888">Cancel</div>
<div class="btn" style="left:1180px;top:90px;width:63px;height:34px;line-height:32px;font-size:14px;color:#fff;background:#ad1625;border-color:#ad1625">Done</div>
<!-- tabs -->
<div style="left:729px;top:131px;width:528px;height:35px;background:#fff;border-bottom:1px solid #bbb"></div>
<div style="left:732px;top:134px;width:200px;height:32px;background:#fff;border:1px solid #bbb;border-bottom:none"></div>
<svg style="left:745px;top:143px" width="12" height="12" viewBox="0 0 12 12"><path d="M5.05 0h1.9l.3 1.55c.38.1.74.26 1.07.45l1.3-.9 1.35 1.35-.9 1.3c.2.33.34.7.45 1.07L12 5.05v1.9l-1.55.3c-.1.38-.26.74-.45 1.07l.9 1.3-1.35 1.35-1.3-.9c-.33.2-.7.34-1.07.45L6.950 12h-1.9l-.3-1.55a4.600 4.600 0 0 1-1.070-.45l-1.300.9-1.350-1.350.9-1.300a4.600 4.600 0 0 1-.45-1.070L0 6.950v-1.900l1.550-.3c.1-.38.260-.74.450-1.070l-.9-1.300 1.350-1.350 1.300.9c.33-.2.700-.340 1.070-.450zM6 3.900a2.100 2.100 0 1 0 0 4.200 2.100 2.100 0 0 0 0-4.200z" fill-rule="evenodd" fill="#888"/></svg>
<div style="left:763px;top:139px;font-size:14px;font-weight:bold;color:#3c3c3c;line-height:20px">Properties</div>
<div style="left:1158px;top:135px;width:28px;height:28px;background:#efefef;border:1px solid #ccc;border-bottom:2px solid #999"></div>
<svg style="left:1166px;top:143px" width="12" height="12" viewBox="0 0 12 12"><path d="M5.05 0h1.9l.3 1.55c.38.1.74.26 1.07.45l1.3-.9 1.35 1.35-.9 1.3c.2.33.34.7.45 1.07L12 5.05v1.9l-1.55.3c-.1.38-.26.74-.45 1.07l.9 1.3-1.35 1.35-1.3-.9c-.33.2-.7.34-1.07.45L6.950 12h-1.9l-.3-1.55a4.600 4.600 0 0 1-1.070-.45l-1.300.9-1.350-1.350.9-1.300a4.600 4.600 0 0 1-.45-1.070L0 6.950v-1.900l1.550-.3c.1-.38.260-.74.450-1.070l-.9-1.300 1.350-1.350 1.300.9c.33-.2.700-.340 1.070-.450zM6 3.900a2.100 2.100 0 1 0 0 4.200 2.100 2.100 0 0 0 0-4.200z" fill-rule="evenodd" fill="#555"/></svg>
<div style="left:1192px;top:135px;width:28px;height:28px;background:#fff;border:1px solid #ccc"></div>
<svg style="left:1199px;top:141px" width="14" height="16" viewBox="0 0 14 16"><path d="M1.6 1.2 H8.6 L12.4 5 V14.8 H1.6 Z M8.6 1.2 V5 H12.4" fill="none" stroke="#888" stroke-width="1.1"/><path d="M3.8 7.6H10.2M3.8 9.8H10.2M3.8 12H10.2" stroke="#888" stroke-width="1"/></svg>
<div style="left:1226px;top:135px;width:28px;height:28px;background:#fff;border:1px solid #ccc"></div>
<svg style="left:1231px;top:140px" width="18" height="18" viewBox="0 0 18 18"><rect x="2.4" y="3.4" width="13.2" height="11.2" fill="none" stroke="#888" stroke-width="1.2"/><rect x="4.8" y="5.8" width="5.6" height="4.4" fill="none" stroke="#888" stroke-width="1.1"/><rect x="7.6" y="8" width="5.6" height="4.4" fill="#fff" stroke="#888" stroke-width="1.1"/><g fill="#fff" stroke="#888" stroke-width="0.9"><circle cx="2.4" cy="3.4" r="1.4"/><circle cx="15.6" cy="3.4" r="1.4"/><circle cx="2.4" cy="14.6" r="1.4"/><circle cx="15.6" cy="14.6" r="1.4"/></g></svg>
<div style="left:729px;top:166px;width:528px;height:753px;overflow:hidden;background:#fff"><div class="pg" style="left:-729px;top:-166px">
<!-- clipping: the Entities box is cut at y=180 -->
<div style="left:729px;top:181px;width:510px;height:100px;overflow:hidden"><div class="pg" style="left:-729px;top:-181px">
  <div class="box" style="left:749px;top:170px;width:473px;height:101px;border-radius:4px"></div>
  <div style="left:750px;top:197px;width:471px;height:1px;background:#ccc"></div>
  <div style="left:754px;top:176px;font-size:12.6px;line-height:18px;color:#555">Entities</div>
</div></div>
<div style="left:755px;top:205.500px;font-size:11px;line-height:16px;color:#555">entity</div>
<div class="inp" style="left:755px;top:223px;width:374px;height:34px;padding-left:10px;line-height:32px;font-size:14px;color:#555">Lounge Exterior [103005]</div>
<svg style="left:1107px;top:236px" width="12" height="8" viewBox="0 0 12 8"><path d="M0.8 1.2 L6 6.4 L11.2 1.2" fill="none" stroke="#444" stroke-width="1.3"/></svg>
<div class="btn" style="left:1139px;top:223px;width:35px;height:34px;border-radius:2px"></div>
<svg style="left:1149px;top:232px" width="15" height="15" viewBox="0 0 15 15"><path d="M1.2 3.6 L3.6 1.2 H7.4 V9.6 H1.2 Z M3.6 1.2 V3.6 H1.2" fill="#fff" stroke="#999" stroke-width="1.1" stroke-linejoin="round"/><path d="M5.6 7 L8 4.600 H12.600 V13.400 H5.600 Z M8 4.600 V7 H5.600" fill="#fff" stroke="#999" stroke-width="1.1" stroke-linejoin="round"/></svg>
<div class="btn" style="left:1184px;top:223px;width:32px;height:34px;border-radius:2px"></div>
<svg style="left:1195px;top:235px" width="10" height="10" viewBox="0 0 10 10"><path d="M1.400 1.400 L8.600 8.600 M8.600 1.400 L1.400 8.600" stroke="#888" stroke-width="2.400"/></svg>
<!-- add buttons -->
<div class="btn sm" style="left:749px;top:275px;width:66px;height:20px;border-radius:2px"><svg class="plus" width="8" height="8" viewBox="0 0 8 8"><path d="M4 0.400V7.600M0.400 4H7.600" stroke="#777" stroke-width="2"/></svg>add entity</div>
<div class="btn sm" style="left:820px;top:275px;width:82px;height:20px;border-radius:2px"><svg class="plus" width="8" height="8" viewBox="0 0 8 8"><path d="M4 0.400V7.600M0.400 4H7.600" stroke="#777" stroke-width="2"/></svg>add substring</div>
<div class="btn sm" style="left:907px;top:275px;width:68px;height:20px;border-radius:2px"><svg class="plus" width="8" height="8" viewBox="0 0 8 8"><path d="M4 0.400V7.600M0.400 4H7.600" stroke="#777" stroke-width="2"/></svg>add regex</div>
<!-- If State -->
<div class="lbl" style="left:749px;top:313px">If State</div>
<div class="inp" style="left:853px;top:307px;width:94px;height:34px;padding-left:11px;line-height:32px;font-size:14px">is</div>
<svg style="left:933px;top:321px" width="10" height="7" viewBox="0 0 10 7"><path d="M1 1 L5 5.200 L9 1" fill="none" stroke="#333" stroke-width="1.900"/></svg>
<div class="ti" style="left:951px;top:307px;width:237px;height:34px"><div class="tb" style="width:41px"></div></div>
<div class="car" style="left:958px;top:322px"></div>
<div style="left:975.500px;top:314.500px;font-size:10px;line-height:12px;color:#555">a</div>
<div style="left:980.500px;top:321.500px;font-size:10px;line-height:12px;color:#555">z</div>
<!-- For -->
<div class="lbl" style="left:749px;top:359px">For</div>
<div class="ti" style="left:853px;top:353px;width:210px;height:34px"><div class="tb" style="width:41px"></div></div>
<div class="car" style="left:859px;top:368px"></div>
<div style="left:877px;top:362px;font-size:9px;line-height:10px;color:#555">0</div>
<div style="left:883px;top:368px;font-size:9px;line-height:10px;color:#555">9</div>
<div style="left:898px;top:360px;font-size:14px;line-height:20px;color:#555">0</div>
<div class="inp" style="left:1073px;top:353px;width:111px;height:34px;padding-left:10px;line-height:32px;font-size:14px">minutes</div>
<svg style="left:1170px;top:367px" width="10" height="7" viewBox="0 0 10 7"><path d="M1 1 L5 5.200 L9 1" fill="none" stroke="#333" stroke-width="1.900"/></svg>
<!-- Output on Connect -->
<div class="cb" style="left:854px;top:403px;background:#2a7a94;border-color:#2a7a94"></div>
<svg style="left:854px;top:403px" width="13" height="13" viewBox="0 0 13 13"><path d="M2.800 6.600 L5.400 9.200 L10.200 3.600" fill="none" stroke="#fff" stroke-width="1.900"/></svg>
<div class="lbl" style="left:876px;top:399px">Output on Connect</div>
<div class="lbl" style="left:749px;top:436px">Ignore state change event when:</div>
<div class="cb" style="left:854px;top:470px"></div><div class="lbl" style="left:876px;top:466px">Previous state doesn't exist</div>
<div class="cb" style="left:854px;top:495px"></div><div class="lbl" style="left:876px;top:491px">Previous state is unknown</div>
<div class="cb" style="left:854px;top:520px"></div><div class="lbl" style="left:876px;top:516px">Previous state is unavailable</div>
<div class="cb" style="left:854px;top:545px"></div><div class="lbl" style="left:876px;top:541px">Current state is unknown</div>
<div class="cb" style="left:854px;top:570px"></div><div class="lbl" style="left:876px;top:566px">Current state is unavailable</div>
<div class="cb" style="left:854px;top:595px"></div><div class="lbl" style="left:876px;top:591px">Current state equals previous state</div>
<div class="box" style="left:749px;top:628px;width:473px;height:189px"></div>
<div style="left:750px;top:653px;width:471px;height:1px;background:#ccc"></div>
<div style="left:754px;top:632px;font-size:12.6px;line-height:18px;color:#555">Output properties</div>
<svg style="left:756px;top:677.5px" width="14" height="13" viewBox="0 0 14 13"><path d="M0.6 2H13.2M0.6 6.500H13.2M0.6 11H13.2" stroke="#999" stroke-width="1.500"/></svg>
<div class="ti" style="left:777px;top:667px;width:123px;height:34px"><div class="tb" style="width:53px"></div></div>
<div class="car" style="left:784px;top:682px"></div>
<div class="lbl" style="left:799px;top:673px">msg.</div>
<div class="lbl" style="left:834px;top:674px">payload</div>
<div class="lbl" style="left:906px;top:673px">=</div>
<div class="ti" style="left:920px;top:667px;width:258px;height:34px;background:#efefef"></div>
<div class="car" style="left:927px;top:682px"></div>
<div class="lbl" style="left:942px;top:673px">entity state</div>
<div style="left:1052px;top:668px;width:1px;height:32px;background:#ccc"></div>
<div class="lbl" style="left:1061px;top:674px">as string</div>
<div class="car" style="left:1160.500px;top:682.5px"></div>
<div class="btn" style="left:1196px;top:675px;width:20px;height:20px;border-radius:2px"></div>
<svg style="left:1202.5px;top:680.7px" width="7" height="7" viewBox="0 0 7 7"><path d="M0.800 0.800 L6.200 6.200 M6.200 0.800 L0.800 6.200" stroke="#888" stroke-width="2.100"/></svg>
<div style="left:755px;top:709px;width:461px;height:1px;background:#ddd"></div>
<svg style="left:756px;top:728.5px" width="14" height="13" viewBox="0 0 14 13"><path d="M0.6 2H13.2M0.6 6.500H13.2M0.6 11H13.2" stroke="#999" stroke-width="1.500"/></svg>
<div class="ti" style="left:777px;top:718px;width:123px;height:34px"><div class="tb" style="width:53px"></div></div>
<div class="car" style="left:784px;top:733px"></div>
<div class="lbl" style="left:799px;top:724px">msg.</div>
<div class="lbl" style="left:834px;top:725px">data</div>
<div class="lbl" style="left:906px;top:724px">=</div>
<div class="ti" style="left:920px;top:718px;width:258px;height:34px;background:#efefef"></div>
<div class="car" style="left:927px;top:733px"></div>
<div class="lbl" style="left:942px;top:724px">event data</div>
<div class="btn" style="left:1196px;top:726px;width:20px;height:20px;border-radius:2px"></div>
<svg style="left:1202.5px;top:731.7px" width="7" height="7" viewBox="0 0 7 7"><path d="M0.800 0.800 L6.200 6.200 M6.200 0.800 L0.800 6.200" stroke="#888" stroke-width="2.100"/></svg>
<div style="left:755px;top:760px;width:461px;height:1px;background:#ddd"></div>
<svg style="left:756px;top:779.5px" width="14" height="13" viewBox="0 0 14 13"><path d="M0.6 2H13.2M0.6 6.500H13.2M0.6 11H13.2" stroke="#999" stroke-width="1.500"/></svg>
<div class="ti" style="left:777px;top:769px;width:123px;height:34px"><div class="tb" style="width:53px"></div></div>
<div class="car" style="left:784px;top:784px"></div>
<div class="lbl" style="left:799px;top:775px">msg.</div>
<div class="lbl" style="left:834px;top:776px">topic</div>
<div class="lbl" style="left:906px;top:775px">=</div>
<div class="ti" style="left:920px;top:769px;width:258px;height:34px;background:#efefef"></div>
<div class="car" style="left:927px;top:784px"></div>
<div class="lbl" style="left:942px;top:775px">entity id</div>
<div class="btn" style="left:1196px;top:777px;width:20px;height:20px;border-radius:2px"></div>
<svg style="left:1202.5px;top:782.7px" width="7" height="7" viewBox="0 0 7 7"><path d="M0.800 0.800 L6.200 6.200 M6.200 0.800 L0.800 6.200" stroke="#888" stroke-width="2.100"/></svg>
<div class="btn sm" style="left:749px;top:821px;width:39px;height:20px;border-radius:2px"><svg class="plus" width="8" height="8" viewBox="0 0 8 8"><path d="M4 0.400V7.600M0.400 4H7.600" stroke="#777" stroke-width="2"/></svg>add</div>
<div class="lbl" style="left:749px;top:860px">Expose as</div>
<div class="inp" style="left:853px;top:853px;width:245px;height:34px;padding-left:10px;line-height:32px;font-size:14px">Add new ha-entity-config...</div>
<svg style="left:1084px;top:867px" width="10" height="7" viewBox="0 0 10 7"><path d="M1 1 L5 5.200 L9 1" fill="none" stroke="#333" stroke-width="1.900"/></svg>
<div class="btn" style="left:1108px;top:853px;width:34px;height:34px;border-radius:2px"></div>
<svg style="left:1118px;top:863px" width="14" height="14" viewBox="0 0 14 14"><path d="M1.400 12.600 L2.200 9.200 L9.400 2 L12 4.600 L4.800 11.800 Z" fill="#ccc"/><path d="M10.200 1.200 L11 0.400 Q11.600 0 12.200 0.600 L13.400 1.800 Q14 2.400 13.400 3 L12.800 3.800 Z" fill="#ccc"/></svg>
<div class="btn" style="left:1152px;top:853px;width:32px;height:34px;border-radius:2px"></div>
<svg style="left:1162.5px;top:863.4px" width="11" height="11" viewBox="0 0 11 11"><path d="M5.500 0.500V10.500M0.500 5.500H10.500" stroke="#777" stroke-width="2.400"/></svg>
<div style="left:749px;top:899.5px;font-size:14px;font-weight:bold;color:#444;word-spacing:1px;line-height:20px;white-space:nowrap">Deprecated Settings (click to expand/collapse)</div>
<div style="left:1242px;top:181px;width:15px;height:738px;background:#fcfcfc"></div>
<div style="left:1245px;top:312px;width:9px;height:589px;background:#8b8b8b;border-radius:4.5px"></div>
<svg style="left:1244px;top:184px" width="11" height="10" viewBox="0 0 11 10"><path d="M5.5 2.800 L9.300 8 H1.700 Z" fill="#8b8b8b" stroke="#8b8b8b" stroke-width="1.400" stroke-linejoin="round"/></svg>
<svg style="left:1244px;top:907px" width="11" height="10" viewBox="0 0 11 10"><path d="M5.500 7.200 L9.300 2 H1.700 Z" fill="#8b8b8b" stroke="#8b8b8b" stroke-width="1.400" stroke-linejoin="round"/></svg>
</div></div>

<div style="left:729px;top:919px;width:528px;height:36px;background:#f3f3f3;border-top:1px solid #bbb"></div>
<div class="btn" style="left:735px;top:925px;width:30px;height:26px;border-radius:2px"></div>
<svg style="left:743.5px;top:932.5px" width="13" height="11" viewBox="0 0 15 12" preserveAspectRatio="none"><g fill="#888"><path d="M3.800 0.400 H14.600 L11.800 8.800 H1.800 Q0 8.800 0.600 7.200 Z"/><path d="M1.200 9.600 H12 L11.400 11.400 H1.600 Q0.200 11 1.200 9.600Z"/><path d="M5.600 2.400H12.200M5 4.200H11.600" stroke="#fff" stroke-width="0.700" opacity="0.550"/></g></svg>
<div class="btn" style="left:770px;top:925px;width:89px;height:26px;border-radius:2px"></div>
<div style="left:778.6px;top:932.4px;width:11.6px;height:11.6px;border:1.6px solid #686868;border-radius:50%"></div>
<div style="left:799px;top:928.5px;font-size:13px;line-height:20px;color:#666">Enabled</div>
</div>

</div>
<div id="sidesep"><i style="position:absolute;left:2px;top:427px;width:3px;height:50px;background:#c8c8c8"></i></div>
<div id="sidebar"><div class="pg">
<div style="left:1266px;top:47px;width:311px;height:36px;background:#fff;border-bottom:1px solid #bbb"></div>
<div style="left:1269px;top:51px;width:133px;height:32px;background:#fff;border:1px solid #bbb;border-bottom:none"></div>
<svg style="left:1282px;top:59px" width="13" height="13" viewBox="0 0 13 13"><g fill="#888" stroke="#888"><ellipse cx="6.500" cy="7.400" rx="3.300" ry="4.600" stroke="none"/><path d="M4.300 3.200 A2.300 2.300 0 0 1 8.700 3.200 Z" stroke="none"/><path d="M0.600 7.400H12.400M1.400 2.800L3.800 5M11.600 2.800L9.200 5M1.400 12.200L3.800 9.800M11.600 12.200L9.200 9.800" fill="none" stroke-width="1.100"/><path d="M6.500 4.400V11.600" stroke="#fff" stroke-width="0.800"/></g></svg>
<div style="left:1300px;top:56px;font-size:14px;font-weight:bold;color:#333;line-height:20px">debug</div>
<div style="left:1412px;top:52px;width:28px;height:28px;background:#efefef;border:1px solid #ccc;border-bottom:2px solid #999"></div>
<svg style="left:1419.500px;top:59px" width="13" height="13" viewBox="0 0 13 13"><g fill="#666" stroke="#666"><ellipse cx="6.500" cy="7.400" rx="3.300" ry="4.600" stroke="none"/><path d="M4.300 3.200 A2.300 2.300 0 0 1 8.700 3.200 Z" stroke="none"/><path d="M0.600 7.400H12.400M1.400 2.800L3.800 5M11.600 2.800L9.200 5M1.400 12.200L3.800 9.800M11.600 12.200L9.200 9.800" fill="none" stroke-width="1.100"/><path d="M6.500 4.400V11.600" stroke="#fff" stroke-width="0.800"/></g></svg>
<div style="left:1446px;top:52px;width:28px;height:28px;background:#fff;border:1px solid #ccc"></div>
<svg style="left:1453.5px;top:59px" width="13" height="14" viewBox="0 0 13 14"><g fill="#888"><ellipse cx="6.5" cy="2.4" rx="6.2" ry="2.2"/><path d="M0.3 3.9 Q6.5 7 12.7 3.9 V6.3 Q6.5 9.4 0.3 6.3 Z"/><path d="M0.3 7.3 Q6.5 10.4 12.7 7.3 V9.5 Q6.5 12.6 0.3 9.5 Z"/><path d="M0.3 10.5 Q6.5 13.6 12.7 10.5 V12.2 Q6.5 15.3 0.3 12.2 Z"/></g></svg>
<div style="left:1480px;top:52px;width:28px;height:28px;background:#fff;border:1px solid #ccc"></div>
<svg style="left:1487.5px;top:60px" width="13.5" height="12" viewBox="0 0 15 12" preserveAspectRatio="none"><g fill="#888"><path d="M3.800 0.400 H14.600 L11.800 8.800 H1.800 Q0 8.800 0.600 7.200 Z"/><path d="M1.200 9.600 H12 L11.400 11.400 H1.600 Q0.200 11 1.200 9.600Z"/><path d="M5.600 2.400H12.200M5 4.200H11.600" stroke="#fff" stroke-width="0.700" opacity="0.550"/></g></svg>
<div style="left:1514px;top:52px;width:28px;height:28px;background:#fff;border:1px solid #ccc"></div>
<svg style="left:1522px;top:60px" width="12" height="12" viewBox="0 0 12 12"><path d="M5.05 0h1.9l.3 1.55c.38.1.74.26 1.07.45l1.3-.9 1.35 1.35-.9 1.3c.2.33.34.7.45 1.07L12 5.05v1.9l-1.55.3c-.1.38-.26.74-.45 1.07l.9 1.3-1.35 1.35-1.3-.9c-.33.2-.7.34-1.07.45L6.950 12h-1.9l-.3-1.55a4.600 4.600 0 0 1-1.070-.45l-1.300.9-1.350-1.350.9-1.300a4.600 4.600 0 0 1-.45-1.070L0 6.950v-1.900l1.550-.3c.1-.38.260-.74.450-1.070l-.9-1.300 1.350-1.350 1.300.9c.33-.2.700-.340 1.070-.450zM6 3.900a2.100 2.100 0 1 0 0 4.200 2.100 2.100 0 0 0 0-4.200z" fill-rule="evenodd" fill="#888"/></svg>
<div style="left:1557.500px;top:64px;width:0;height:0;border-left:4.500px solid transparent;border-right:4.500px solid transparent;border-top:5px solid #888"></div>
<div style="left:1266px;top:83px;width:311px;height:42px;background:#f3f3f3;border-bottom:1px solid #ddd"></div>
<div class="btn" style="left:1392px;top:91px;width:97px;height:25px;border-radius:2px"></div>
<svg style="left:1401px;top:99px" width="10" height="10" viewBox="0 0 10 10"><path d="M0.200 0.200 H9.800 L6.200 4.400 V9.800 L3.800 8 V4.400 Z" fill="#888"/></svg>
<div style="left:1415px;top:94.500px;font-size:13px;line-height:18px;color:#888">all nodes</div>
<div style="left:1475.500px;top:101.500px;width:0;height:0;border-left:4px solid transparent;border-right:4px solid transparent;border-top:4.500px solid #888"></div>
<div class="btn" style="left:1499px;top:91px;width:60px;height:25px;border-radius:2px"></div>
<svg style="left:1508px;top:97.500px" width="10" height="12" viewBox="0 0 10 12"><path d="M3.400 0.300 H6.600 L7.200 1.600 H9.800 V2.800 H0.200 V1.600 H2.800 Z" fill="#888"/><path d="M1 3.400 H9 V10.600 Q9 11.700 8 11.700 H2 Q1 11.700 1 10.600 Z" fill="#888"/><path d="M3.200 4.800V10.200M5 4.800V10.200M6.800 4.800V10.200" stroke="#fff" stroke-width="0.700"/></svg>
<div style="left:1522px;top:94.500px;font-size:13px;line-height:18px;color:#888">all</div>
<div style="left:1545.500px;top:101.500px;width:0;height:0;border-left:4px solid transparent;border-right:4px solid transparent;border-top:4.500px solid #888"></div>
<div style="left:1266px;top:125px;width:311px;height:803px;background:#fff"></div>
<div style="left:1266px;top:125px;width:8px;height:743px;background:#eee"></div>
<div style="left:1571px;top:125px;width:8px;height:743px;background:#eee"></div>
<div style="left:1274px;top:322px;width:297px;height:1px;background:#eee"></div>
<div style="left:1266px;top:867px;width:311px;height:1px;background:#eee"></div>
<div class="dm" style="left:1276px;top:132.1px">11/29/2025, 8:56:53 PM &nbsp; node: debug 120</div>
<div class="dm" style="left:1276px;top:151.6px;color:#ad1625">cover.unknown_type_0x19_0x12_103005_0 : msg : Object</div>
<div style="left:1283px;top:179px;width:0;height:0;border-left:4px solid transparent;border-right:4px solid transparent;border-top:5px solid #777"></div>
<div class="mono" style="left:1293px;top:173.8px"><span class="t">object</span></div>
<div class="mono" style="left:1295px;top:196.8px"><span class="k">payload</span>: <span class="s">"closed"</span></div>
<div style="left:1285.5px;top:223.500px;width:0;height:0;border-top:4px solid transparent;border-bottom:4px solid transparent;border-left:5px solid #777"></div>
<div class="mono" style="left:1295px;top:219.8px"><span class="k">data</span>: <span class="t">object</span></div>
<div class="mono" style="left:1295px;top:242.8px"><span class="k">topic</span>:</div>
<div class="mono" style="left:1295px;top:259.8px"><span class="s">"cover.unknown_type_0x19_0x12_103005_</span></div>
<div class="mono" style="left:1295px;top:275.8px"><span class="s">0"</span></div>
<div class="mono" style="left:1295px;top:298.8px"><span class="k">_msgid</span>: <span class="s">"afaa691eabe49d37"</span></div>
<div class="dm" style="left:1276px;top:328.2px">11/29/2025, 8:58:04 PM &nbsp; node: debug 120</div>
<div class="dm" style="left:1276px;top:347.7px;color:#ad1625">cover.unknown_type_0x19_0x12_103005_0 : msg : Object</div>
<div style="left:1283px;top:375px;width:0;height:0;border-left:4px solid transparent;border-right:4px solid transparent;border-top:5px solid #777"></div>
<div class="mono" style="left:1293px;top:369.8px"><span class="t">object</span></div>
<div class="mono" style="left:1295px;top:392.8px"><span class="k">payload</span>: <span class="s">"open"</span></div>
<div style="left:1284px;top:421px;width:0;height:0;border-left:4px solid transparent;border-right:4px solid transparent;border-top:5px solid #777"></div>
<div class="mono" style="left:1295px;top:415.8px"><span class="k">data</span>: <span class="t">object</span></div>
<div class="mono" style="left:1310px;top:439.3px"><span class="k">entity_id</span>:</div>
<div class="mono" style="left:1310px;top:456.3px"><span class="s">"cover.unknown_type_0x19_0x12_10300</span></div>
<div class="mono" style="left:1310px;top:472.8px"><span class="s">5_0"</span></div>
<div style="left:1299px;top:501px;width:0;height:0;border-left:4px solid transparent;border-right:4px solid transparent;border-top:5px solid #777"></div>
<div class="mono" style="left:1310px;top:495.8px"><span class="k">old_state</span>: <span class="t">object</span></div>
<div class="mono" style="left:1325px;top:518.8px"><span class="k">entity_id</span>:</div>
<div class="mono" style="left:1325px;top:535.8px"><span class="s">"cover.unknown_type_0x19_0x12_103</span></div>
<div class="mono" style="left:1325px;top:552.3px"><span class="s">005_0"</span></div>
<div class="mono" style="left:1325px;top:574.8px"><span class="k">state</span>: <span class="s">"closed"</span></div>
<div style="left:1315.5px;top:601.5px;width:0;height:0;border-top:4px solid transparent;border-bottom:4px solid transparent;border-left:5px solid #777"></div>
<div class="mono" style="left:1325px;top:597.8px"><span class="k">attributes</span>: <span class="t">object</span></div>
<div class="mono" style="left:1325px;top:621.3px"><span class="k">last_changed</span>: <span class="s">"2025-11-</span></div>
<div class="mono" style="left:1325px;top:638.3px"><span class="s">29T20:56:53.131521+00:00"</span></div>
<div class="mono" style="left:1325px;top:661.8px"><span class="k">last_reported</span>: <span class="s">"2025-11-</span></div>
<div class="mono" style="left:1325px;top:678.3px"><span class="s">29T20:56:53.131521+00:00"</span></div>
<div class="mono" style="left:1325px;top:702.3px"><span class="k">last_updated</span>: <span class="s">"2025-11-</span></div>
<div class="mono" style="left:1325px;top:718.8px"><span class="s">29T20:56:53.131521+00:00"</span></div>
<div style="left:1315.5px;top:745.5px;width:0;height:0;border-top:4px solid transparent;border-bottom:4px solid transparent;border-left:5px solid #777"></div>
<div class="mono" style="left:1325px;top:741.8px"><span class="k">context</span>: <span class="t">object</span></div>
<div style="left:1300.5px;top:768.5px;width:0;height:0;border-top:4px solid transparent;border-bottom:4px solid transparent;border-left:5px solid #777"></div>
<div class="mono" style="left:1310px;top:764.8px"><span class="k">new_state</span>: <span class="t">object</span></div>
<div class="mono" style="left:1295px;top:785.8px"><span class="k">topic</span>:</div>
<div class="mono" style="left:1295px;top:803.3px"><span class="s">"cover.unknown_type_0x19_0x12_103005_</span></div>
<div class="mono" style="left:1295px;top:819.8px"><span class="s">0"</span></div>
<div class="mono" style="left:1295px;top:842.8px"><span class="k">_msgid</span>: <span class="s">"40c394028de325f0"</span></div>
<div style="left:1266px;top:929px;width:311px;height:26px;background:#f3f3f3;border-top:1px solid #bbb"></div>
<div class="btn" style="left:1554px;top:934px;width:18px;height:17px;border-radius:2px"></div>
<svg style="left:1557px;top:937px" width="12" height="11" viewBox="0 0 12 11"><rect x="0.6" y="0.6" width="10.800" height="7" rx="0.800" fill="none" stroke="#888" stroke-width="1.200"/><rect x="1.600" y="1.600" width="8.800" height="5" fill="#bbb"/><path d="M4.600 8 H7.400 L8 9.600 H9 V10.600 H3 V9.600 H4 Z" fill="#888"/></svg>
</div>
</div>
</body>
</html>
